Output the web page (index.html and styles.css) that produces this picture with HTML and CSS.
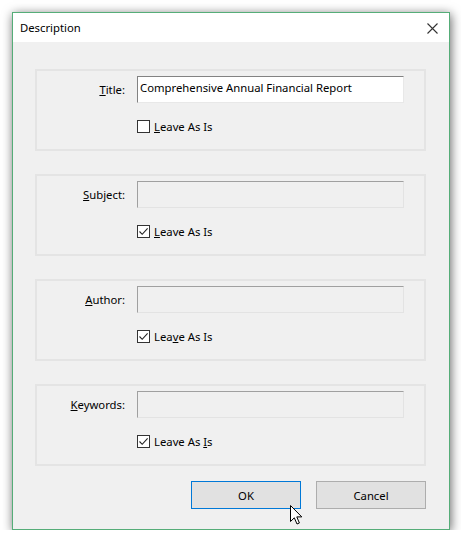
FILE: index.html
```html
<!DOCTYPE html>
<html>
<head>
<meta charset="utf-8">
<link rel="stylesheet" href="styles.css">
</head>
<body>
<div class="window">
  <div class="titlebar">
    <span class="title">Description</span>
    <svg class="close" width="11" height="11" viewBox="0 0 11 11"><path d="M0.5 0.5 L10.5 10.5 M10.5 0.5 L0.5 10.5" stroke="#333" stroke-width="1.1" fill="none"/></svg>
  </div>
  <div class="content">
    <div class="group">
      <label class="lbl"><u>T</u>itle:</label>
      <div class="field enabled">Comprehensive Annual Financial Report</div>
      <div class="check">
        <span class="box"></span>
        <span class="ctext"><u>L</u>eave As Is</span>
      </div>
    </div>
    <div class="group">
      <label class="lbl"><u>S</u>ubject:</label>
      <div class="field"></div>
      <div class="check">
        <span class="box"><svg width="11" height="11" viewBox="0 0 11 11"><path d="M1.5 5.5 L4.2 8.3 L9.6 2.4" stroke="#222" stroke-width="1.1" fill="none"/></svg></span>
        <span class="ctext"><u>L</u>eave As Is</span>
      </div>
    </div>
    <div class="group">
      <label class="lbl"><u>A</u>uthor:</label>
      <div class="field"></div>
      <div class="check">
        <span class="box"><svg width="11" height="11" viewBox="0 0 11 11"><path d="M1.5 5.5 L4.2 8.3 L9.6 2.4" stroke="#222" stroke-width="1.1" fill="none"/></svg></span>
        <span class="ctext">Lea<u>v</u>e As Is</span>
      </div>
    </div>
    <div class="group">
      <label class="lbl"><u>K</u>eywords:</label>
      <div class="field"></div>
      <div class="check">
        <span class="box"><svg width="11" height="11" viewBox="0 0 11 11"><path d="M1.5 5.5 L4.2 8.3 L9.6 2.4" stroke="#222" stroke-width="1.1" fill="none"/></svg></span>
        <span class="ctext">Leave As <u>I</u>s</span>
      </div>
    </div>
    <div class="buttons">
      <button class="btn default">OK</button>
      <button class="btn">Cancel</button>
    </div>
  </div>
  <svg class="cursor" width="13" height="20" viewBox="0 0 13 20"><path d="M0.5 0.5 L0.5 16.5 L4.3 12.8 L7 19 L9.4 18 L6.8 11.9 L11.8 11.9 Z" fill="#fff" stroke="#000" stroke-width="1" stroke-linejoin="miter"/></svg>
</div>
</body>
</html>
```
FILE: styles.css
```css
html, body {
  margin: 0;
  padding: 0;
  background: #ffffff;
}
body {
  font-family: "Noto Sans", "Open Sans", sans-serif;
  font-size: 11.3px;
  color: #000;
}
.window {
  position: relative;
  margin: 12px 0 0 12px;
  width: 438px;
  height: 518px;
  box-sizing: border-box;
  border: 1px solid #55ad78;
  background: #f0f0f0;
  box-shadow: 1px 2px 10px rgba(0, 0, 0, 0.6);
  display: flex;
  flex-direction: column;
}
.titlebar {
  height: 29px;
  background: #ffffff;
  display: flex;
  align-items: center;
  justify-content: space-between;
  padding: 0 11px 0 7px;
}
.title {
  line-height: 16px;
  margin-top: 1px;
}
.close {
  display: block;
  margin-top: 1px;
}
.content {
  flex: 1;
  padding: 27px 23px 0 22px;
  display: flex;
  flex-direction: column;
  gap: 23px;
}
.group {
  height: 82px;
  box-sizing: border-box;
  border: 2px solid #e4e4e4;
  padding: 5px 20px 0 0;
  display: grid;
  grid-template-columns: 88px 1fr;
  grid-template-rows: 27px 13px;
  column-gap: 12px;
  row-gap: 16px;
  align-items: center;
}
.lbl {
  text-align: right;
  line-height: 16px;
  color: #000;
}
.field {
  height: 27px;
  box-sizing: border-box;
  border-style: solid;
  border-width: 1px;
  border-color: #a0a0a0 #e3e3e3 #e3e3e3 #a0a0a0;
  background: #f0f0f0;
  padding: 0 2px;
  line-height: 21px;
  white-space: nowrap;
  overflow: hidden;
}
.field.enabled {
  background: #ffffff;
  border-color: #828282 #e8e8e8 #e8e8e8 #828282;
}
.check {
  grid-column: 2;
  display: flex;
  align-items: center;
  height: 13px;
  margin-top: 2px;
}
.box {
  width: 13px;
  height: 13px;
  box-sizing: border-box;
  border: 1px solid #333;
  background: #fff;
  display: flex;
  align-items: center;
  justify-content: center;
  flex: none;
}
.box svg {
  display: block;
}
.ctext {
  margin-left: 4px;
  line-height: 16px;
  white-space: nowrap;
}
.buttons {
  display: flex;
  justify-content: flex-end;
  gap: 15px;
  margin-top: -8px;
}
.btn {
  width: 110px;
  height: 28px;
  box-sizing: border-box;
  border: 1px solid #adadad;
  background: #e1e1e1;
  font-family: "Noto Sans", "Open Sans", sans-serif;
  font-size: 11.3px;
  color: #000;
  padding: 0;
}
.btn.default {
  border-color: #0078d7;
}
.cursor {
  position: absolute;
  left: 277px;
  top: 492px;
}
```
